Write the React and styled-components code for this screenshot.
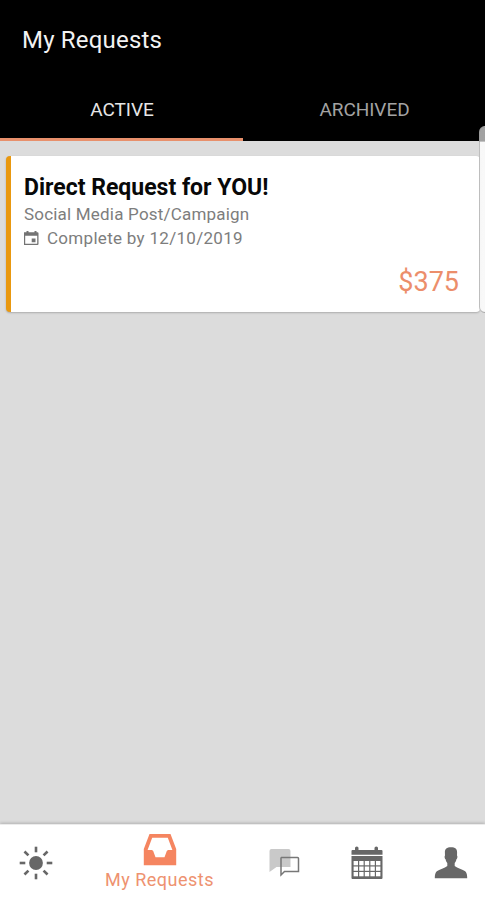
import React from "react";
import styled, { createGlobalStyle } from "styled-components";

const GlobalStyle = createGlobalStyle`
  * {
    box-sizing: border-box;
  }

  body {
    margin: 0;
    font-family: Roboto, "Liberation Sans", sans-serif;
  }
`;

const Screen = styled.div`
  position: relative;
  display: flex;
  flex-direction: column;
  width: 485px;
  height: 900px;
  overflow: hidden;
  background-color: #dcdcdc;
`;

const Header = styled.header`
  display: flex;
  flex-direction: column;
  height: 141px;
  background-color: #000;
`;

const Title = styled.h1`
  margin: 0;
  padding: 26px 0 0 22px;
  height: 80px;
  color: #f2f2f2;
  font-size: 24px;
  font-weight: 400;
  line-height: 28px;
  letter-spacing: 0.2px;
`;

const Tabs = styled.nav`
  display: grid;
  grid-template-columns: 243px 242px;
  flex: 1;
`;

const Tab = styled.div`
  display: flex;
  align-items: center;
  justify-content: center;
  padding: 1px 0 0 1px;
  border-bottom: 3px solid ${({ $active }) => ($active ? "#e8906c" : "#000")};
  color: ${({ $active }) => ($active ? "#e6e6e6" : "#a3a3a3")};
  font-size: 19px;
  letter-spacing: -0.05px;
`;

const Content = styled.main`
  flex: 1;
  padding: 15px 5px 0 6px;
`;

const Card = styled.article`
  display: flex;
  flex-direction: column;
  height: 156px;
  padding: 19px 21px 14px 13px;
  border-left: 5px solid #e9980f;
  border-radius: 4px;
  background-color: #fff;
  box-shadow: 0 1px 2px rgba(0, 0, 0, 0.22);
`;

const CardTitle = styled.h2`
  margin: 0 0 1px;
  color: #080808;
  font-size: 23px;
  font-weight: 700;
  line-height: 26px;
`;

const CardLine = styled.div`
  display: flex;
  align-items: center;
  gap: 8px;
  height: 24px;
  color: #7d7d7d;
  font-size: 17px;
  letter-spacing: ${({ $spacing }) => $spacing};
`;

const Price = styled.div`
  margin-top: auto;
  align-self: flex-end;
  color: #ec8e6b;
  font-size: 27px;
  line-height: 32px;
`;

const EdgeHandle = styled.div`
  position: absolute;
  top: 126px;
  right: -6px;
  width: 12px;
  height: 187px;
  border: 1px solid rgba(150, 150, 150, 0.6);
  border-radius: 7px;
  background: linear-gradient(
    rgba(190, 190, 190, 0.85) 15px,
    rgba(249, 249, 249, 0.95) 15px
  );
`;

const BottomNav = styled.nav`
  display: grid;
  grid-template-columns: 71px 177px 72px 94px 73px;
  height: 76px;
  border-top: 1px solid #ececec;
  background-color: #fff;
  box-shadow: 0 -1px 3px rgba(0, 0, 0, 0.2);
`;

const NavItem = styled.div`
  display: flex;
  flex-direction: column;
  align-items: center;
  padding-top: ${({ $active }) => ($active ? "8px" : "21px")};
  color: ${({ $active }) => ($active ? "#f58560" : "#676767")};
`;

const NavLabel = styled.span`
  margin-top: 2px;
  color: #ee9270;
  font-size: 18px;
  line-height: 22px;
  letter-spacing: 0.5px;
`;

const EventIcon = () => (
  <svg width="15" height="15" viewBox="0 0 15 15">
    <path
      fill="#737373"
      fillRule="evenodd"
      d="M2.500 0h2v1.200h6V0h2v1.200H13.500q1 0 1 1V13q0 1-1 1h-13q-1 0-1-1V2.200q0-1 1-1h2zM1.200 4.800v7.900h12V4.800zM7.700 7.500h3.800v3.800H7.700z"
    />
  </svg>
);

const SunIcon = () => (
  <svg width="34" height="34" viewBox="0 0 34 34">
    <circle cx="17" cy="17" r="6.900" fill="currentColor" />
    <g stroke="currentColor" strokeWidth="2.6">
      {[0, 45, 90, 135, 180, 225, 270, 315].map((angle) => (
        <path key={angle} d="M17 0.700v5.600" transform={`rotate(${angle} 17 17)`} />
      ))}
    </g>
  </svg>
);

const InboxIcon = () => (
  <svg width="34" height="34" viewBox="0 0 34 34">
    <path
      fill="currentColor"
      fillRule="evenodd"
      d="M6.500 1h21L33.200 16v16.200H.8V16zM9.200 4.800L4.600 17h4.400l1.200 1 2.300 6.300h9L23.800 18l1.200-1h4.400L24.800 4.800z"
    />
  </svg>
);

const ChatIcon = () => (
  <svg width="34" height="34" viewBox="0 0 34 34">
    <path
      fill="#c9c9c9"
      d="M4.500 3h17q2 0 2 2v16H9.500l-7 5V5q0-2 2-2z"
    />
    <path
      fill="none"
      stroke="#777"
      strokeWidth="1.500"
      d="M14.500 11.500h16q1 0 1 1v13H17.500l-3.500 3.500V12z"
    />
  </svg>
);

const CalendarIcon = () => (
  <svg width="34" height="34" viewBox="0 0 34 34">
    <path
      fill="currentColor"
      d="M2.500 4H5V2q0-1.500 1.800-1.500T8.500 2v2h16V2q0-1.500 1.800-1.500T28 2v2h3.500q1 0 1 1v3.700h-31V5q0-1 1-1zM1.500 10h31v22q0 1-1 1h-29q-1 0-1-1z"
    />
    <g fill="#fff">
      {[15, 20.500, 26].map((y) =>
        [3.600, 9.200, 14.800, 20.400, 26].map((x) => (
          <rect key={`${x}-${y}`} x={x} y={y} width="4.400" height="4.300" />
        ))
      )}
    </g>
  </svg>
);

const PersonIcon = () => (
  <svg width="34" height="34" viewBox="0 0 34 34">
    <path
      fill="currentColor"
      d="M17 1.200c4.200 0 6.300 1.600 6.100 5.300l-.1 3c.8.500.4 3.500-.7 4-.2 1.700-.8 2.700-1.600 3.500v3c2.500 2 8 3.600 10.500 5.300 1.500 1.300 2 3.500 2 6.900H.8c0-3.400.5-5.600 2-6.900C5.300 23.600 10.800 22 13.300 20v-3c-.8-.8-1.400-1.800-1.600-3.500-1.100-.5-1.500-3.500-.7-4l-.1-3c-.2-3.700 1.900-5.300 6.100-5.300z"
    />
  </svg>
);

const App = () => {
  return (
    <>
      <GlobalStyle />
      <Screen>
        <Header>
          <Title>My Requests</Title>
          <Tabs>
            <Tab $active>ACTIVE</Tab>
            <Tab>ARCHIVED</Tab>
          </Tabs>
        </Header>
        <Content>
          <Card>
            <CardTitle>Direct Request for YOU!</CardTitle>
            <CardLine $spacing="0.2px">Social Media Post/Campaign</CardLine>
            <CardLine $spacing="0.3px">
              <EventIcon />
              Complete by 12/10/2019
            </CardLine>
            <Price>$375</Price>
          </Card>
        </Content>
        <BottomNav>
          <NavItem>
            <SunIcon />
          </NavItem>
          <NavItem $active>
            <InboxIcon />
            <NavLabel>My Requests</NavLabel>
          </NavItem>
          <NavItem>
            <ChatIcon />
          </NavItem>
          <NavItem>
            <CalendarIcon />
          </NavItem>
          <NavItem>
            <PersonIcon />
          </NavItem>
        </BottomNav>
        <EdgeHandle />
      </Screen>
    </>
  );
};

export default App;
